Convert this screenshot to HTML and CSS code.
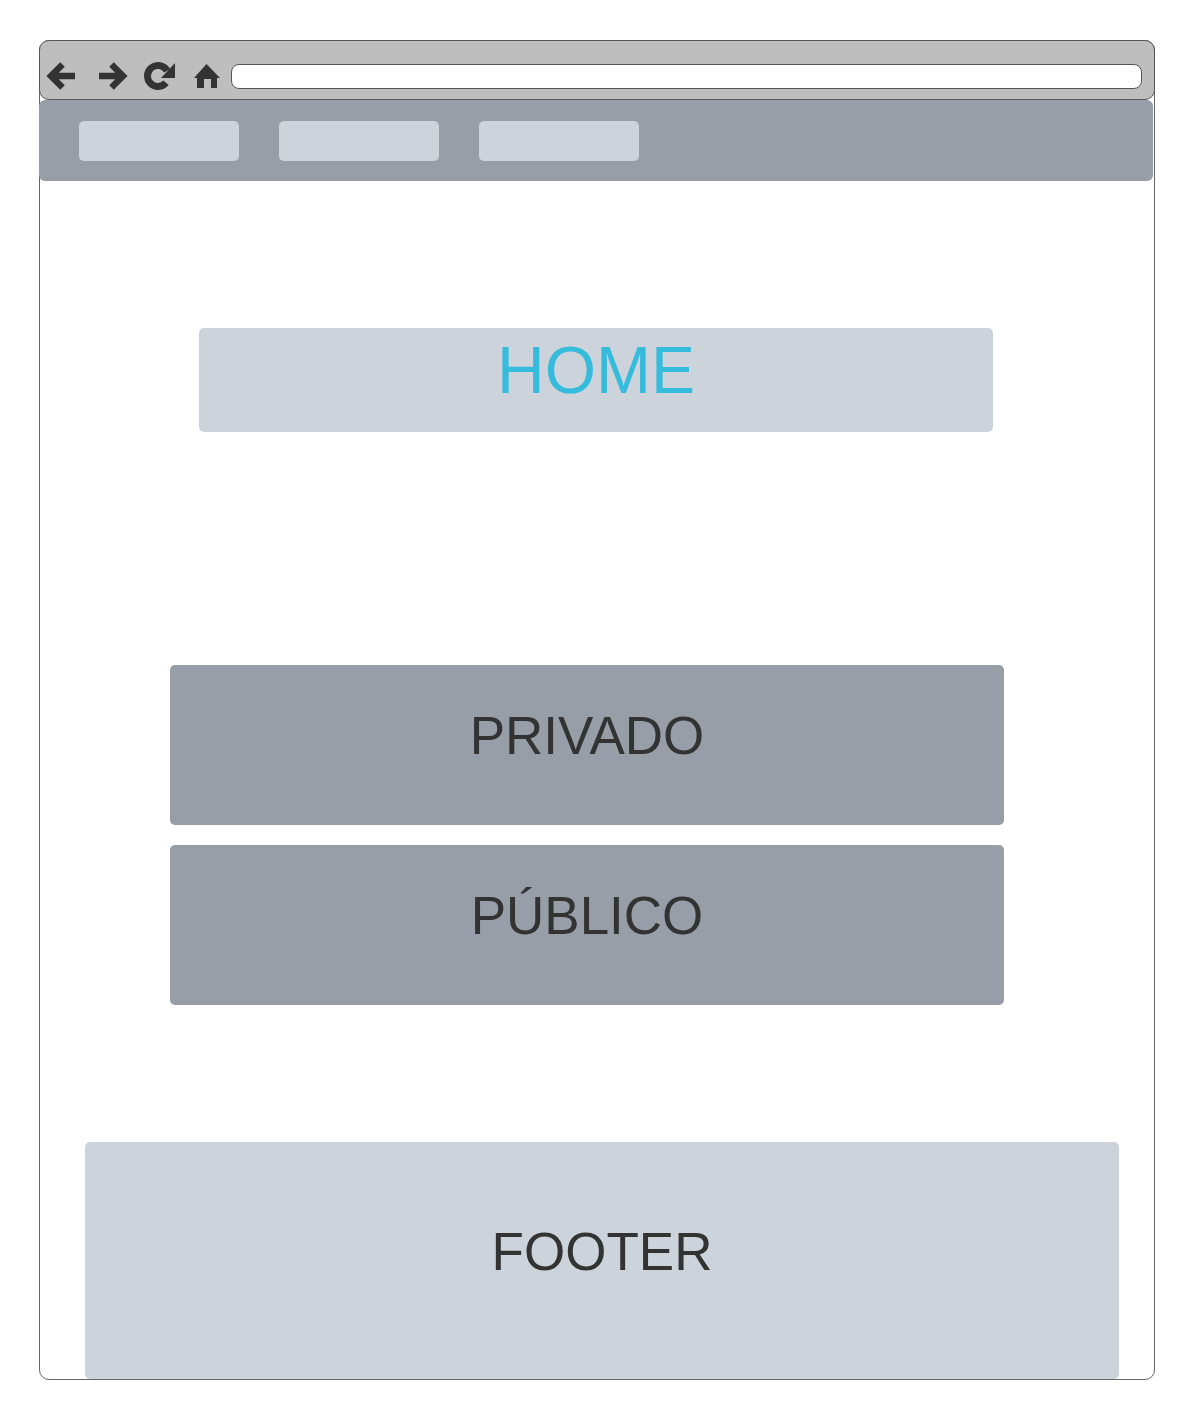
FILE: index.html
```html
<!DOCTYPE html>
<html>
<head>
    <meta charset="utf-8">
    <title>Wireframe</title>
    <link rel="stylesheet" href="styles.css">
</head>
<body>
<div class="frame">
    <div class="toolbar">
        <svg class="icon icon-back" viewBox="0 0 30 30"><path d="M29 15H6M16.500 3.500L5 15L16.500 26.500" fill="none" stroke="#333" stroke-width="6.500"/></svg>
        <svg class="icon icon-forward" viewBox="0 0 30 30"><path d="M1 15H24M13.500 3.500L25 15L13.500 26.500" fill="none" stroke="#333" stroke-width="6.500"/></svg>
        <svg class="icon icon-reload" viewBox="0 0 32 30"><path d="M23.100 9.750A10.500 10.500 0 1 0 22 21.700" fill="none" stroke="#333" stroke-width="7"/><path d="M31 2V17H17Z" fill="#333"/></svg>
        <svg class="icon icon-home" viewBox="0 0 30 30"><path d="M14.500 3L28 17H25V27H19V18H12V27H5V17H2Z" fill="#333"/></svg>
        <div class="address"></div>
    </div>
    <div class="nav">
        <div class="nav-item"></div>
        <div class="nav-item"></div>
        <div class="nav-item"></div>
    </div>
    <div class="home">HOME</div>
    <div class="block block-first">PRIVADO</div>
    <div class="block">PÚBLICO</div>
    <div class="footer">FOOTER</div>
</div>
</body>
</html>
```

FILE: styles.css
```css
* {
    box-sizing: border-box;
}
body {
    margin: 0;
    padding: 40px 0 39px 39px;
    background-color: #fff;
    font-family: "Liberation Sans", Arial, sans-serif;
    color: #333;
}
.frame {
    width: 1116px;
    height: 1340px;
    border: 1px solid #666;
    border-radius: 10px;
}
.toolbar {
    display: flex;
    align-items: center;
    height: 60px;
    margin: -1px -1px 0;
    padding: 12px 12px 0 6px;
    background-color: #bebebe;
    border: 1px solid #555;
    border-radius: 10px;
}
.icon {
    flex: none;
    width: 30px;
    height: 30px;
}
.icon-forward {
    margin-left: 22px;
}
.icon-reload {
    width: 32px;
    margin-left: 16px;
}
.icon-home {
    margin-left: 16px;
}
.address {
    flex: 1;
    height: 25px;
    margin: 1px 0 0 9px;
    background-color: #fff;
    border: 1px solid #555;
    border-radius: 8px;
}
.nav {
    display: flex;
    gap: 40px;
    height: 81px;
    margin: 0 1px 0 -1px;
    padding: 21px 40px 0;
    background-color: #989ea7;
    border-radius: 6px;
}
.nav-item {
    width: 160px;
    height: 40px;
    background-color: #ccd3da;
    border-radius: 5px;
}
.home {
    width: 794px;
    height: 104px;
    margin: 147px 0 0 159px;
    padding-top: 7px;
    background-color: #ccd3da;
    border-radius: 5px;
    color: #35bbdc;
    font-size: 66px;
    line-height: 70px;
    text-align: center;
}
.block {
    width: 834px;
    height: 160px;
    margin: 20px 0 0 130px;
    padding-top: 41px;
    background-color: #989ea7;
    border-radius: 5px;
    font-size: 53px;
    line-height: 60px;
    text-align: center;
}
.block-first {
    margin-top: 233px;
}
.footer {
    width: 1034px;
    height: 237px;
    margin: 137px 0 0 45px;
    padding-top: 80px;
    background-color: #ccd3da;
    border-radius: 5px;
    font-size: 53px;
    line-height: 60px;
    text-align: center;
}
```
